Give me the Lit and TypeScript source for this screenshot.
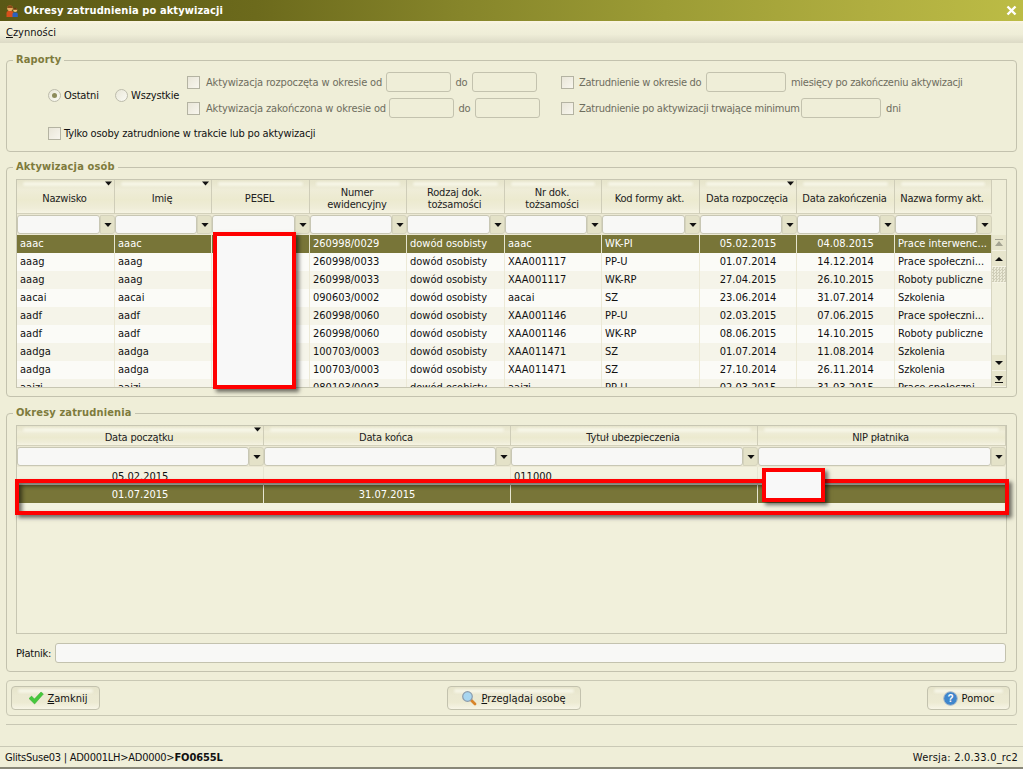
import { LitElement, html, css, svg } from "lit";
import { customElement } from "lit/decorators.js";

const C1 = [98, 97, 98, 97, 98, 97, 98, 97, 98, 97];
const H1 = ["Nazwisko", "Imię", "PESEL", "Numer\newidencyjny", "Rodzaj dok.\ntożsamości", "Nr dok.\ntożsamości", "Kod formy akt.", "Data rozpoczęcia", "Data zakończenia", "Nazwa formy akt."];
const SORT1 = [0, 1, 7];
const R1 = [
  ["aaac", "aaac", "", "260998/0029", "dowód osobisty", "aaac", "WK-PI", "05.02.2015", "04.08.2015", "Prace interwenc..."],
  ["aaag", "aaag", "", "260998/0033", "dowód osobisty", "XAA001117", "PP-U", "01.07.2014", "14.12.2014", "Prace społeczni..."],
  ["aaag", "aaag", "", "260998/0033", "dowód osobisty", "XAA001117", "WK-RP", "27.04.2015", "26.10.2015", "Roboty publiczne"],
  ["aacai", "aacai", "", "090603/0002", "dowód osobisty", "aacai", "SZ", "23.06.2014", "31.07.2014", "Szkolenia"],
  ["aadf", "aadf", "", "260998/0060", "dowód osobisty", "XAA001146", "PP-U", "02.03.2015", "07.06.2015", "Prace społeczni..."],
  ["aadf", "aadf", "", "260998/0060", "dowód osobisty", "XAA001146", "WK-RP", "08.06.2015", "14.10.2015", "Roboty publiczne"],
  ["aadga", "aadga", "", "100703/0003", "dowód osobisty", "XAA011471", "SZ", "01.07.2014", "11.08.2014", "Szkolenia"],
  ["aadga", "aadga", "", "100703/0003", "dowód osobisty", "XAA011471", "SZ", "27.10.2014", "26.11.2014", "Szkolenia"],
  ["aaizi", "aaizi", "", "080103/0003", "dowód osobisty", "aaizi", "PP-U", "02.03.2015", "31.03.2015", "Prace społeczni..."],
];
const C2 = [247, 247, 247, 248];
const H2 = ["Data początku", "Data końca", "Tytuł ubezpieczenia", "NIP płatnika"];
const R2 = [
  ["05.02.2015", "", "011000", ""],
  ["01.07.2015", "31.07.2015", "", ""],
];
const cols = (c: number[]) => c.map((n) => n + "px").join(" ");
const arrow = svg`<svg width="9" height="5" viewBox="0 0 9 5"><path d="M0 0h9L4.5 5z" fill="#111"/></svg>`;

@customElement("app-root")
export class AppRoot extends LitElement {
  static styles = css`
    :host { display: block; position: relative; width: 1023px; height: 769px; overflow: hidden; background: #efeed8; font: 11px "DejaVu Sans Condensed", "DejaVu Sans", sans-serif; color: #111; }
    .win { height: 769px; display: flex; flex-direction: column; }
    .title { height: 21px; flex: none; display: flex; align-items: center; padding: 0 6px; gap: 6px; color: #fff; letter-spacing: .1px; font: bold 11px "DejaVu Sans Condensed", "DejaVu Sans", sans-serif; background: linear-gradient(90deg, #5a5815 0%, #6c6a1c 25%, #86852a 45%, #9c9c35 65%, #b0ae40 85%, #bcbc45 100%); }
    .title .sp { flex: 1; }
    .menu { height: 22px; flex: none; display: flex; align-items: center; padding: 0 6px; box-sizing: border-box; background: linear-gradient(180deg, #fbf4e2 0%, #f3f1dc 15%, #efeed8 60%, #dcdac6 100%); }
    u { text-decoration: underline; }
    .main { flex: 1; display: flex; flex-direction: column; padding: 10px 6px 0 6px; }
    fieldset { margin: 0; padding: 0; border: 1px solid #c3c2ae; border-radius: 4px; box-sizing: border-box; min-width: 0; }
    legend { font: bold 11px "DejaVu Sans Condensed", "DejaVu Sans", sans-serif; letter-spacing: .15px; color: #7e7b3c; padding: 0 3px; margin-left: 6px; line-height: 14px; }
    .rap { height: 99px; }
    .rbody { padding: 5px 0 0 41px; letter-spacing: -.15px; }
    .rtop { display: flex; }
    .radios { display: flex; align-items: center; width: 139px; height: 46px; }
    .radio { flex: none; width: 13px; height: 13px; border-radius: 50%; border: 1px solid #bdbcac; box-sizing: border-box; background: linear-gradient(135deg, #e9e7d8, #fafaf3); display: flex; align-items: center; justify-content: center; margin-right: 3px; }
    .radio i { width: 5px; height: 5px; border-radius: 50%; background: #8c8b5c; }
    .w1 { width: 51px; }
    .ropt { display: flex; flex-direction: column; gap: 6px; }
    .mid { width: 374px; }
    .rline { display: flex; align-items: center; height: 20px; color: #6e6d5e; white-space: nowrap; }
    .cb { flex: none; width: 13px; height: 13px; border: 1px solid #b4b3a2; box-sizing: border-box; background: linear-gradient(135deg, #e9e6d8, #f8f6ee); margin-right: 6px; }
    .mid .cb { margin-right: 6px; }
    .right .cb { margin-right: 5px; }
    .l1 { width: 180px; }
    .l2 { width: 183px; }
    .l3 { width: 127px; }
    .l4 { width: 222px; }
    .tight { letter-spacing: -.27px; }
    .do { width: 21px; text-align: center; }
    .inp { flex: none; height: 20px; box-sizing: border-box; border: 1px solid #c3c2ae; border-radius: 3px; background: #efeed8; }
    .i65 { width: 65px; }
    .i80 { width: 80px; margin-right: 5px; }
    .tylko { display: flex; align-items: center; height: 20px; margin-top: 5px; }
    .tylko .cb { margin-right: 3px; }
    .fbody { padding: 5px 9px 0 9px; }
    .akt { height: 237px; margin-top: 8px; }
    .table { border: 1px solid #c7c6b2; box-sizing: border-box; overflow: hidden; }
    .hrow, .frow, .row { display: grid; }
    .hcell { position: relative; box-sizing: border-box; border-right: 1px solid #cfcdb8; border-bottom: 1px solid #d3d1bb; display: flex; align-items: center; justify-content: center; text-align: center; white-space: pre-line; line-height: 12px; letter-spacing: -.2px; padding: 5px 4px 1px 2px; background: linear-gradient(180deg, #e6e4ca 0%, #efedd8 30%, #eceacf 60%, #efedd8 85%, #f6f4e3 100%); color: #222; }
    .hcell::before, .btn::before { content: ""; position: absolute; left: 6px; right: 6px; top: 2px; height: 4px; border-radius: 3px; background: #f6f5e6; filter: blur(1px); }
    .hcell > span.t, .btn > * { position: relative; }
    .hcell .s { position: absolute; right: 2px; top: 1px; line-height: 0; }
    .hcell .s svg { width: 7px; height: 5px; }
    .fcell { display: flex; padding: 1px 0 0 0; box-sizing: border-box; height: 21px; background: #ece9d4; }
    .fin { flex: 1; min-width: 0; height: 19px; box-sizing: border-box; background: #f8f8f6; border: 1px solid #c8c7b4; border-radius: 3px; }
    .fbtn { flex: none; width: 15px; height: 19px; box-sizing: border-box; display: flex; align-items: center; justify-content: center; border-radius: 0 3px 3px 0; background: #e4e2c8; border: 1px solid #d5d3bc; }
    .fbtn svg { width: 8px; height: 4px; }
    .t1wrap { display: flex; }
    .t1body { width: 975px; height: 152px; overflow: hidden; }
    .row { height: 18px; }
    .row.a { background: #fbfbf7; }
    .row.b { background: #f5f4e9; }
    .row.sel { background: #787538; color: #fff; }
    .cell { box-sizing: border-box; padding: 0 3px; line-height: 18px; white-space: nowrap; overflow: hidden; border-right: 1px solid #ece9d6; }
    .sel .cell { border-right-color: #e6e5cf; }
    .cell.c { text-align: center; }
    .sb { width: 14px; display: flex; flex-direction: column; height: 152px; background: #efeed8; border-left: 1px solid #d8d6c2; box-sizing: content-box; }
    .sbb { height: 15px; flex: none; display: flex; align-items: center; justify-content: center; background: #e7e5cc; border-bottom: 1px solid #f5f3e4; }
    .sbb svg { width: 8px; height: 8px; }
    .thumb { background: repeating-conic-gradient(#cfcdb8 0 25%, #ecebd8 0 50%) 0 0 / 3px 3px; }
    .sbf { flex: 1; background: #f0efdc; }
    .okr { height: 266px; margin-top: 9px; display: flex; flex-direction: column; }
    .t2 { height: 209px; background: #f1f0db; }
    .t2 .row.a { background: #f3f2e0; }
    .t2 .cell { border-right-color: #e7e6d2; padding-top: 1px; }
    .plat { display: flex; align-items: center; gap: 4px; height: 20px; margin: 9px 1px 0 0; }
    .plat span { width: 35px; flex: none; white-space: nowrap; letter-spacing: -.2px; }
    .plat .inp { flex: 1; background: #f8f8f6; }
    .btns { height: 36px; margin-top: 8px; border: 1px solid #c9c8b4; border-radius: 4px; box-sizing: border-box; display: flex; align-items: center; justify-content: space-between; padding: 0 6px 0 4px; }
    .btn { position: relative; height: 24px; box-sizing: border-box; border: 1px solid #c3c2ae; border-radius: 4px; display: flex; align-items: center; justify-content: center; gap: 4px; background: linear-gradient(180deg, #e6e4ca 0%, #ebe9d2 40%, #ecead2 70%, #f7f5e6 100%); }
    .bz { width: 89px; padding-left: 4px; }
    .bp { width: 134px; }
    .bh { width: 83px; }
    .line { height: 1px; background: #c8c7b4; margin-top: 8px; }
    .gap { flex: 1; }
    .status { height: 23px; flex: none; box-sizing: border-box; border-top: 1px solid #cac9b6; border-bottom: 2px solid #888778; display: flex; align-items: center; justify-content: space-between; padding: 0 5px; background: #efeed8; }
    .sl { letter-spacing: -.25px; }
    .sl b { letter-spacing: -.1px; }
    .sr { letter-spacing: .2px; }
    .red { position: absolute; box-sizing: border-box; border: 4px solid #f00; box-shadow: 3px 3px 4px rgba(0,0,0,.55); }
    .fill { background: #f8f8f8; }
    .pesel { left: 213px; top: 232px; width: 83px; height: 157px; }
    .band { left: 15px; top: 479px; width: 994px; height: 36px; box-shadow: 3px 3px 4px rgba(0,0,0,.55), inset 3px 3px 4px rgba(0,0,0,.55); }
    .nip { left: 762px; top: 468px; width: 63px; height: 34px; }
  `;

  hdr(h: string[], c: number[], sort: number[], height: number) {
    return html`<div class="hrow" style="grid-template-columns:${cols(c)};height:${height}px">
      ${h.map((t, i) => html`<div class="hcell"><span class="t">${t}</span>${sort.includes(i) ? html`<span class="s">${arrow}</span>` : ""}</div>`)}
    </div>`;
  }
  flt(c: number[]) {
    return html`<div class="frow" style="grid-template-columns:${cols(c)}">
      ${c.map(() => html`<div class="fcell"><div class="fin"></div><div class="fbtn">${arrow}</div></div>`)}
    </div>`;
  }
  render() {
    return html`<div class="win">
      <div class="title">
        <svg width="12" height="12" viewBox="0 0 12 12"><path d="M0.5 12V8q0-2 2-2h3q2 0 2 2v4z" fill="#d8501c"/><circle cx="4" cy="3.2" r="2.8" fill="#e8a860"/><path d="M1.2 3a2.8 2.8 0 0 1 5.6 0z" fill="#8a4a18"/><path d="M6.5 12V9q0-1.6 1.5-1.6h2.3q1.5 0 1.5 1.6v3z" fill="#2b62c0"/><circle cx="9.2" cy="5" r="2.1" fill="#f2c070"/><path d="M7.1 4.8a2.1 2.1 0 0 1 4.2 0z" fill="#6a3a10"/></svg>
        <span>Okresy zatrudnienia po aktywizacji</span>
        <span class="sp"></span>
        <svg width="11" height="11" viewBox="0 0 11 11"><path d="M1.5 1.5l8 8M9.5 1.5l-8 8" stroke="#fff" stroke-width="2.4"/></svg>
      </div>
      <div class="menu"><span><u>C</u>zynności</span></div>
      <div class="main">
        <fieldset class="rap"><legend>Raporty</legend>
          <div class="rbody">
            <div class="rtop">
              <div class="radios">
                <div class="radio"><i></i></div><span class="w1">Ostatni</span>
                <div class="radio"></div><span>Wszystkie</span>
              </div>
              <div class="ropt mid">
                <div class="rline"><div class="cb"></div><span class="l1">Aktywizacja rozpoczęta w okresie od</span><div class="inp i65"></div><span class="do">do</span><div class="inp i65"></div></div>
                <div class="rline"><div class="cb"></div><span class="l2">Aktywizacja zakończona w okresie od</span><div class="inp i65"></div><span class="do">do</span><div class="inp i65"></div></div>
              </div>
              <div class="ropt right">
                <div class="rline"><div class="cb"></div><span class="l3 tight">Zatrudnienie w okresie do</span><div class="inp i80"></div><span class="tight">miesięcy po zakończeniu aktywizacji</span></div>
                <div class="rline"><div class="cb"></div><span class="l4 tight">Zatrudnienie po aktywizacji trwające minimum</span><div class="inp i80"></div>dni</div>
              </div>
            </div>
            <div class="tylko"><div class="cb"></div>Tylko osoby zatrudnione w trakcie lub po aktywizacji</div>
          </div>
        </fieldset>

        <fieldset class="akt"><legend>Aktywizacja osób</legend>
          <div class="fbody">
            <div class="table">
              <div>${this.hdr(H1, C1, SORT1, 34)}${this.flt(C1)}</div>
              <div class="t1wrap">
                <div class="t1body">
                  ${R1.map((r, i) => html`<div class="row ${i === 0 ? "sel" : i % 2 ? "a" : "b"}" style="grid-template-columns:${cols(C1)}">
                    ${r.map((t, j) => html`<div class="cell ${j === 7 || j === 8 ? "c" : ""}">${t}</div>`)}
                  </div>`)}
                </div>
                <div class="sb">
                  <div class="sbb"><svg viewBox="0 0 8 8"><path d="M0 0h8v1H0zM4 2l4 5H0z" fill="#a5a492"/></svg></div>
                  <div class="sbb"><svg viewBox="0 0 8 8"><path d="M4 2l4 4H0z" fill="#111"/></svg></div>
                  <div class="sbb thumb"></div>
                  <div class="sbf"></div>
                  <div class="sbb"><svg viewBox="0 0 8 8"><path d="M0 2h8L4 6z" fill="#111"/></svg></div>
                  <div class="sbb"><svg viewBox="0 0 8 8"><path d="M0 1h8L4 6zM0 7h8v1H0z" fill="#111"/></svg></div>
                </div>
              </div>
            </div>
          </div>
        </fieldset>

        <fieldset class="okr"><legend>Okresy zatrudnienia</legend>
          <div class="fbody">
            <div class="table t2">
              ${this.hdr(H2, C2, [0], 20)}${this.flt(C2)}
              ${R2.map((r, i) => html`<div class="row ${i === 1 ? "sel" : "a"}" style="grid-template-columns:${cols(C2)}">
                ${r.map((t, j) => html`<div class="cell ${j < 2 ? "c" : ""}">${t}</div>`)}
              </div>`)}
              <div class="row a"></div>
            </div>
            <div class="plat"><span>Płatnik:</span><div class="inp"></div></div>
          </div>
        </fieldset>

        <div class="btns">
          <div class="btn bz">
            <svg width="16" height="14" viewBox="0 0 16 14"><path d="M1 7.5l2.6-2.4L6.4 8 13 1l2.4 2L6.6 13z" fill="#45c83c" stroke="#35a82e" stroke-width=".5"/></svg>
            <span><u>Z</u>amknij</span></div>
          <div class="btn bp">
            <svg width="16" height="16" viewBox="0 0 16 16"><path d="M9.5 9.5l4.5 4.5" stroke="#d8842a" stroke-width="2.8" stroke-linecap="round"/><circle cx="6.5" cy="6.5" r="4.8" fill="#a8d6f0" stroke="#8c9cac" stroke-width="1.2"/></svg>
            <span><u>P</u>rzeglądaj osobę</span></div>
          <div class="btn bh">
            <svg width="15" height="15" viewBox="0 0 15 15"><circle cx="7.5" cy="7.5" r="6.8" fill="#3f86cc" stroke="#a8b8c8"/><text x="7.5" y="11" text-anchor="middle" font-size="10" font-weight="bold" font-family="Liberation Sans" fill="#fff">?</text></svg>
            <span>Pomoc</span></div>
        </div>
        <div class="line"></div>
        <div class="gap"></div>
      </div>
      <div class="status"><span class="sl">GlitsSuse03 | AD0001LH&gt;AD0000&gt;<b>FO0655L</b></span><span class="sr">Wersja: 2.0.33.0_rc2</span></div>
      <div class="red fill pesel"></div>
      <div class="red band"></div>
      <div class="red fill nip"></div>
    </div>`;
  }
}
